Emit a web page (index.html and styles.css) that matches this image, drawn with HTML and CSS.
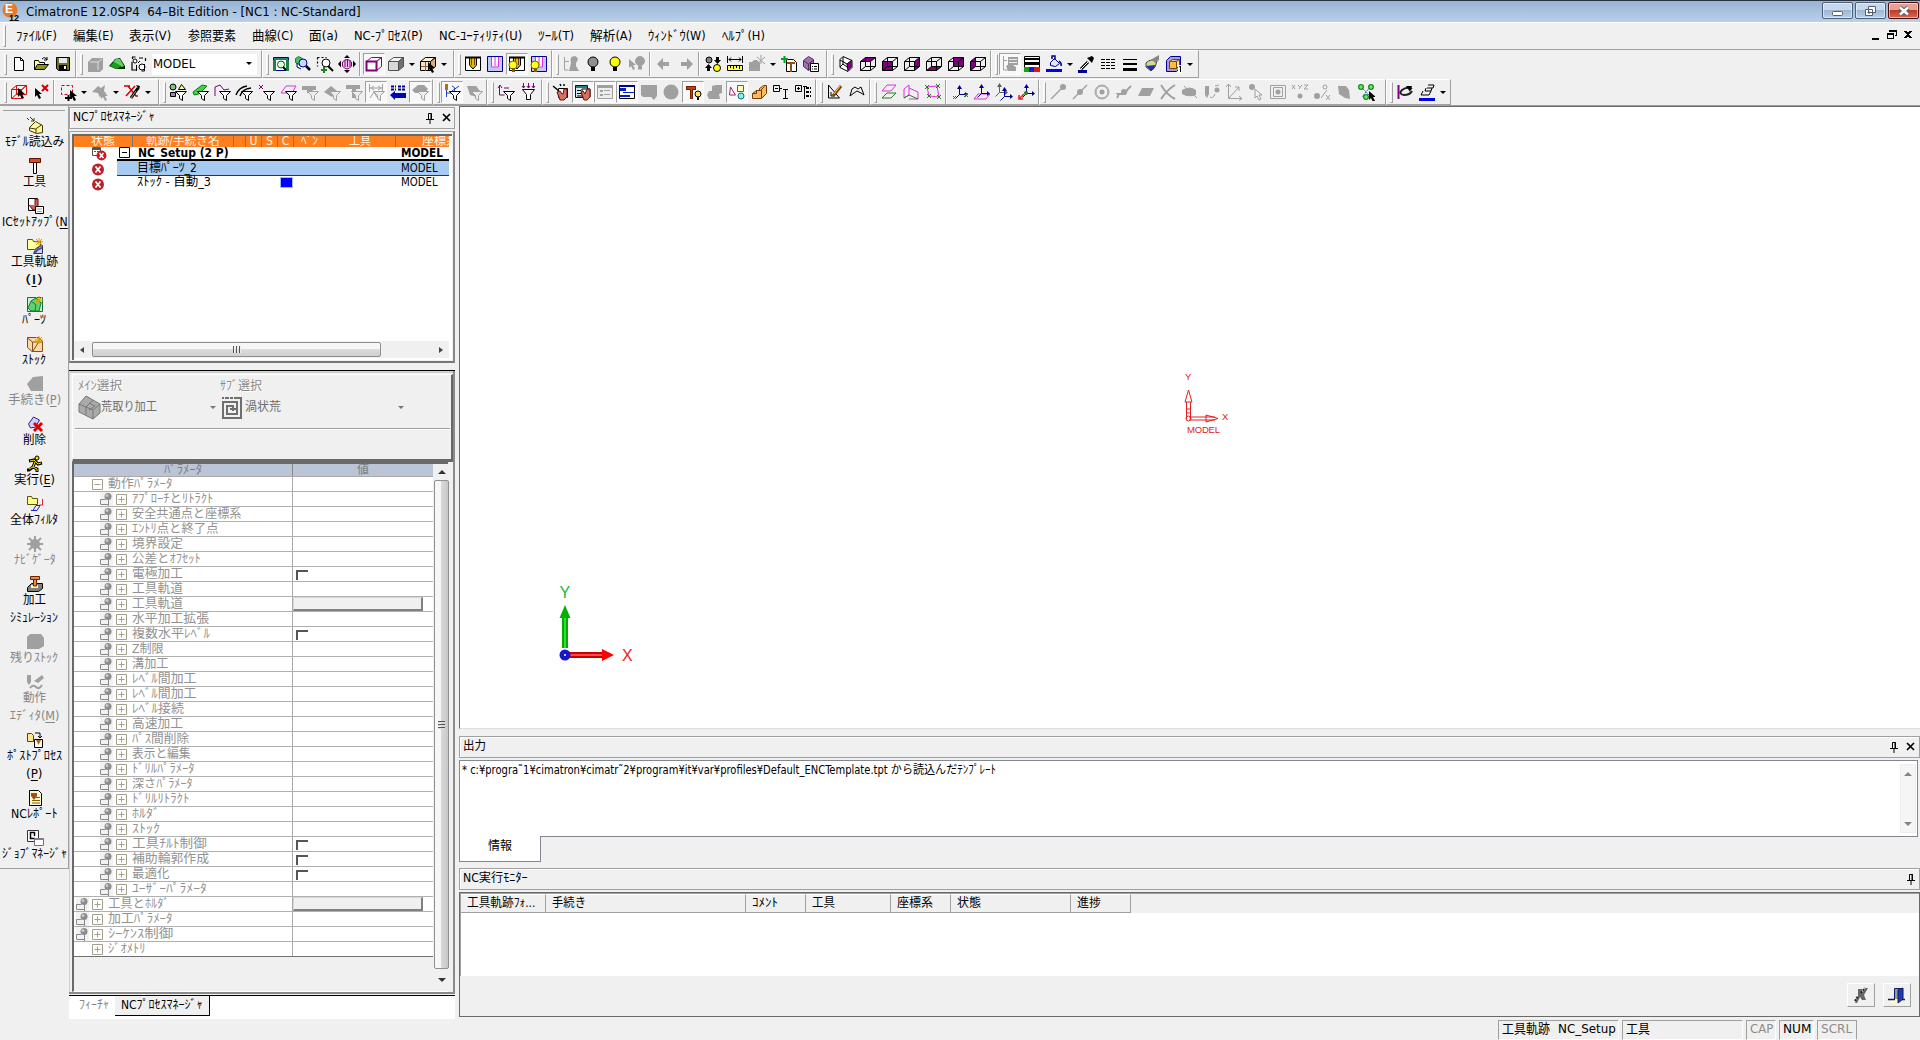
FILE: index.html
```
<!DOCTYPE html>
<html lang="ja">
<head>
<meta charset="utf-8">
<title>CimatronE 12.0SP4</title>
<link rel="stylesheet" href="styles.css">
</head>
<body>
<header class="titlebar">
  <svg class="app-icon" width="18" height="20" viewBox="0 0 18 20"><circle cx="8" cy="8" r="7.5" fill="#e8782a"/><text x="3" y="11" class="app-e">E</text><text x="7" y="19" class="app-n">12</text></svg>
  <span class="t" data-w="335">CimatronE 12.0SP4&nbsp; 64–Bit Edition - [NC1 : NC-Standard]</span>
  <div class="winbtns">
    <span class="winbtn"><svg width="30" height="16"><rect x="9.500" y="8.500" width="10" height="4" rx="1" fill="#fff" stroke="#555f70"/></svg></span>
    <span class="winbtn"><svg width="30" height="16"><path d="M12.500 3.500h7v6h-7zM9.500 6.500h7v6h-7z" fill="#fff" stroke="#555f70"/><path d="M12 9h2v1h-2z" fill="#555f70" stroke="#555f70"/></svg></span>
    <span class="winbtn close"><svg width="30" height="16"><path d="M11 4.500l8 7M19 4.500l-8 7" stroke="#555f70" stroke-width="4.500"/><path d="M11 4.500l8 7M19 4.500l-8 7" stroke="#fff" stroke-width="2.500"/></svg></span>
  </div>
</header>
<nav class="menubar">
  <i class="grip"></i>
  <span class="t" data-w="41">ﾌｧｲﾙ(F)</span><span class="t" data-w="41">編集(E)</span><span class="t" data-w="42">表示(V)</span><span class="t" data-w="48">参照要素</span><span class="t" data-w="41">曲線(C)</span><span class="t" data-w="29">面(a)</span><span class="t" data-w="69">NC-ﾌﾟﾛｾｽ(P)</span><span class="t" data-w="83">NC-ﾕｰﾃｨﾘﾃｨ(U)</span><span class="t" data-w="36">ﾂｰﾙ(T)</span><span class="t" data-w="42">解析(A)</span><span class="t" data-w="58">ｳｨﾝﾄﾞｳ(W)</span><span class="t" data-w="43">ﾍﾙﾌﾟ(H)</span>
  <svg class="mdi" width="44" height="12" shape-rendering="crispEdges"><path d="M3 8h7v2H3z"/><path d="M20.500 .5h7v5h-2M18.500 3.500h6v5h-6z" fill="none" stroke="#000"/><path d="M20 0h8v2h-8zM18 3h7v2h-7z"/><path d="M36 1l6 7M42 1l-6 7" stroke="#000" stroke-width="2.200"/></svg>
</nav>
<div class="toolbar row1" id="row1"></div>
<div class="toolbar row2" id="row2"></div>
<main class="work">
  <aside class="side" id="side"></aside>
  <section class="manager">
    <div class="cap"><span class="t" data-w="82">NCﾌﾟﾛｾｽﾏﾈｰｼﾞｬ</span><span class="cap-ico"><svg width="8" height="12" class="pin"><path d="M2.500 7V1.500h3V7M0 7.500h8M4 8v4M5 1v6" /></svg><svg width="9" height="9" class="x"><path d="M1 1l7 7M8 1l-7 7"/></svg></span></div>
    <div class="sunk tree">
      <div class="tree-in">
        <div class="thead"><b><span class="t" data-w="24">状態</span></b><b><span class="t" data-w="74">軌跡/手続き名</span></b><b></b><b>U</b><b>S</b><b>C</b><b><span class="t" data-w="17">ﾍﾟﾝ</span></b><b><span class="t" data-w="22">工具</span></b><b class="cut"><span class="t" data-w="36">座標系</span></b></div>
        <div class="prow first"><span class="st"><svg width="15" height="14"><path d="M.5 .5h8v8h-8z" fill="#fff" stroke="#555"/><path d="M1 1h7v2H1zM2 4h2v1H2zM5 4h2v1H5z" fill="#555"/><circle cx="9.500" cy="8.500" r="5" fill="#c41e2a"/><path d="M7.500 6l4 5M11.500 6l-4 5" stroke="#fff" stroke-width="1.500"/></svg></span><span class="nm"><svg width="11" height="11" class="box"><path d="M.5 .5h10v10H.5zM3 5.500h5"/></svg><span class="t" data-w="91">NC_Setup (2 P)</span></span><span class="md"><span class="t" data-w="42">MODEL</span></span></div>
        <div class="prow sel"><span class="st"><svg width="12" height="13"><circle cx="6" cy="6.500" r="6" fill="#b8232c"/><path d="M3.500 3.500l5 6M8.500 3.500l-5 6" stroke="#fff" stroke-width="1.800"/></svg></span><span class="nm leaf"><span class="t" data-w="60">目標ﾊﾟｰﾂ_2</span></span><span class="md"><span class="t" data-w="37">MODEL</span></span></div>
        <div class="prow last"><span class="st"><svg width="12" height="13"><circle cx="6" cy="6.500" r="6" fill="#b8232c"/><path d="M3.500 3.500l5 6M8.500 3.500l-5 6" stroke="#fff" stroke-width="1.800"/></svg></span><span class="nm leaf"><span class="t" data-w="74">ｽﾄｯｸ - 自動_3</span><i class="swatch"></i></span><span class="md"><span class="t" data-w="37">MODEL</span></span></div>
        <div class="hscroll"><i class="la"></i><div class="thumb"><i></i><i></i><i></i></div><i class="ra"></i></div>
      </div>
    </div>
    <div class="param-wrap">
      <div class="chooser">
        <div class="ch-labels"><span class="t" data-w="44">ﾒｲﾝ選択</span><span class="t second" data-w="42">ｻﾌﾞ選択</span></div>
        <div class="ch-vals">
          <svg width="23" height="25"><path d="M1 9L8 1l14 8v9l-7 6-14-7z" fill="#aaa" stroke="#777"/><path d="M1 9l14 6v9M15 15l7-6M8 12l7-7M8 12v8M11 8l6 3-6 4" fill="none" stroke="#777"/></svg><span class="t" data-w="56">荒取り加工</span><i class="dn a1"></i>
          <svg width="21" height="22" class="spiral" shape-rendering="crispEdges"><path d="M0 0h2v2H0zM3 0h4v2H3zM8 0h3v2H8zM12 0h8v2h-8z" fill="#6f6f6f"/><path d="M19 1v20H1V5h14v12H5V9h6v5M8 12h6" fill="none" stroke="#6f6f6f" stroke-width="2"/></svg><span class="t" data-w="36">渦状荒</span><i class="dn a2"></i>
        </div>
        <hr>
      </div>
      <div class="ptable">
        <div class="pt-main"><div class="pt-head"><span><span class="t" data-w="38">ﾊﾟﾗﾒｰﾀ</span></span><span><span class="t" data-w="12">値</span></span></div><div id="params"></div></div>
        <div class="vscroll"><i class="ua"></i><div class="vthumb"><i></i><i></i><i></i></div><i class="da"></i></div>
      </div>
    </div>
    <div class="tabs"><span class="tab off"><span class="t" data-w="30">ﾌｨｰﾁｬ</span></span><span class="tab on"><span class="t" data-w="82">NCﾌﾟﾛｾｽﾏﾈｰｼﾞｬ</span></span></div>
  </section>
  <section class="right">
    <div class="viewport">
      <svg width="1456" height="620" class="scene">
        <g stroke="#e02020" fill="none"><path d="M726.500 312V295M730.500 312V295M725 295h7l-3.500-12zM729 313h26M729 310h26M746 308v7l12-3.500zM726 306h5M726 302h5"/><circle cx="728.500" cy="311.500" r="2.500"/></g>
        <g class="model-t"><text x="725" y="273">Y</text><text x="762" y="313">X</text><text x="727" y="325.500" textLength="33">MODEL</text></g>
        <path d="M102 541V509h6v32z" fill="#05a805"/><path d="M104 541V509h2v32z" fill="#27e827"/><path d="M99.500 511h11l-5.500-13z" fill="#05b005"/>
        <path d="M109 545h34v6h-34z" fill="#c80000"/><path d="M109 547h34v2h-34z" fill="#ff4848"/><path d="M142 542v12l12-6z" fill="#f00"/>
        <circle cx="105" cy="548" r="5.500" fill="#1717c8"/><circle cx="105" cy="548" r="1" fill="#fff"/>
        <text class="ax gy" x="99.500" y="491">Y</text><text class="ax rx" x="162" y="553.500">X</text>
      </svg>
    </div>
    <div class="cap out-cap"><span class="t" data-w="23">出力</span><span class="cap-ico"><svg width="8" height="12" class="pin"><path d="M2.500 7V1.500h3V7M0 7.500h8M4 8v4M5 1v6" /></svg><svg width="9" height="9" class="x"><path d="M1 1l7 7M8 1l-7 7"/></svg></span></div>
    <div class="output"><p><span class="t" data-w="534">* c:¥progra˜1¥cimatron¥cimatr˜2¥program¥it¥var¥profiles¥Default_ENCTemplate.tpt から読込んだﾃﾝﾌﾟﾚｰﾄ</span></p><div class="oscroll"><i class="ua"></i><i class="da"></i></div></div>
    <div class="out-tabs"><span><span class="t" data-w="24">情報</span></span><i></i></div>
    <div class="cap nc-cap"><span class="t" data-w="65">NC実行ﾓﾆﾀｰ</span><span class="cap-ico"><svg width="8" height="12" class="pin"><path d="M2.500 7V1.500h3V7M0 7.500h8M4 8v4M5 1v6" /></svg></span></div>
    <div class="monitor">
      <div class="mhead"><span><span class="t" data-w="68">工具軌跡ﾌｫ...</span></span><span><span class="t" data-w="34">手続き</span></span><span><span class="t" data-w="26">ｺﾒﾝﾄ</span></span><span><span class="t" data-w="23">工具</span></span><span><span class="t" data-w="36">座標系</span></span><span><span class="t" data-w="24">状態</span></span><span><span class="t" data-w="24">進捗</span></span></div>
      <div class="mbody"></div>
      <div class="mfoot"><span class="btn"><svg width="16" height="18"><path d="M5 3h4v4l4-5h2l-4 7 2 5H9L7 11l-3 6H2l3-7z" fill="#666"/><path d="M2 15l3-5M8 7l4-5" stroke="#222" stroke-width="2" stroke-dasharray="2 1"/></svg></span><span class="btn"><svg width="18" height="18"><path d="M1 17l5-4h4v4z" fill="#ffffc0"/><path d="M6.500 13V2.500h8" fill="none" stroke="#111a70"/><path d="M7 3h4v10H7z" fill="#999"/><path d="M10 4l5-2v11l-5 4z" fill="#1c3cb0" stroke="#101a60"/><path d="M0 13.500h7M14 13.500h3" stroke="#101a60" stroke-width="1.500"/></svg></span></div>
    </div>
  </section>
</main>
<footer class="status"><span class="w1"><span class="t" data-w="48">工具軌跡</span><span class="t" data-w="58">NC_Setup</span></span><span class="w2"><span class="t" data-w="24">工具</span></span><span class="w3 dim"><span class="t" data-w="23">CAP</span></span><span class="w4"><span class="t" data-w="28">NUM</span></span><span class="w5 dim"><span class="t" data-w="31">SCRL</span></span></footer>
<script src="app.js"></script>
</body>
</html>
```
FILE: styles.css
```
* { box-sizing: border-box; }
body { margin: 0; width: 1920px; height: 1040px; overflow: hidden; display: flex; flex-direction: column; background: #f0f0f0; color: #000; font: 12px/15px "DejaVu Sans Condensed", "Noto Sans", "Noto Sans CJK JP", sans-serif; }
svg { display: block; flex: none; }
.t { display: inline-block; white-space: pre; transform-origin: 0 50%; flex: none; }
i { flex: none; }

.titlebar { height: 22px; flex: none; display: flex; align-items: center; border-top: 1px solid #26323f; background: linear-gradient(#98b4d3, #b9d0ea); padding: 0 1px 0 2px; font-size: 13px; }
.app-icon { margin-right: 6px; }
.app-e { font: bold 12px "Liberation Sans", sans-serif; fill: #fff; }
.app-n { font: bold 9px "Liberation Sans", sans-serif; }
.winbtns { margin: -2px 0 0 auto; display: flex; gap: 2px; }
.winbtn { width: 31px; height: 17px; border: 1px solid #4d6078; border-radius: 2px; background: linear-gradient(#c5d8ed 45%, #9db7d3 50%, #b9d0e8); box-shadow: inset 0 0 0 1px #ffffff80; }
.winbtn.close { border-color: #4a1018; background: linear-gradient(#e4a294 45%, #c13a2a 50%, #d46a50); }

.menubar { height: 27px; flex: none; display: flex; align-items: center; gap: 16px; padding: 0 7px 0 3px; border-top: 1px solid #fff; font-size: 13px; }
.menubar .t { margin-top: -1px; }
.menubar .grip { margin-right: -6px; height: 22px; }
.mdi { margin-left: auto; }
.grip { width: 3px; height: 21px; border: 1px solid; border-color: #fff #a0a0a0 #a0a0a0 #fff; }

.toolbar { display: flex; flex: none; border-top: 1px solid #a0a0a0; }
.row1 { height: 29px; }
.row2 { height: 28px; border-top-color: #f0f0f0; border-bottom: 1px solid #a0a0a0; }
.group { display: flex; align-items: center; border-top: 1px solid #fff; border-right: 1px solid #a0a0a0; border-left: 1px solid #fff; border-bottom: 1px solid #a0a0a0; padding-left: 3px; }
.group.start { border-left: 0; padding-left: 4px; }
.group .grip { margin-right: 1px; }
.ic { width: 22px; height: 22px; flex: none; display: flex; align-items: center; justify-content: center; }
.ic.on { border: 1px solid; border-color: #a0a0a0 #fff #fff #a0a0a0; background: #f8f8f8; }
.sep { width: 5px; height: 24px; border-left: 1px solid #a0a0a0; box-shadow: inset 1px 0 #fff; margin-left: 1px; margin-right: -1px; }
.dd { width: 10px; display: flex; justify-content: center; }
.dd::after, .dn { content: ""; border: solid transparent; border-width: 3px 3px 0; border-top-color: #000; width: 0; height: 0; }
.combo { width: 105px; height: 21px; background: #fff; display: flex; align-items: center; padding: 0 3px 2px 1px; justify-content: space-between; margin-left: 2px; font-size: 13px; }

.work { flex: none; height: 914px; display: grid; grid-template-columns: 69px 387px 1464px; }
.side { height: 763px; border-right: 1px solid #a0a0a0; border-bottom: 1px solid #a0a0a0; padding: 11px 0 0 1px; overflow: hidden; background: linear-gradient(#a0a0a0, #a0a0a0) 3px 4px / 62px 1px no-repeat, #f0f0f0; }
.tool { height: 40px; display: flex; flex-direction: column; align-items: center; line-height: 18px; font-size: 12.500px; }
.tool.two { height: 58px; }
.tool svg { margin-bottom: -2px; }
.tool.off { color: #868686; }
.tool u { text-underline-offset: 2px; }

.cap { border: 1px solid #a0a0a0; height: 22px; display: flex; align-items: center; padding: 0 4px 1px 3px; flex: none; box-shadow: inset 1px 1px #fff; }
.cap-ico { margin-left: auto; display: flex; gap: 8px; align-items: center; }
.pin path { stroke: #000; fill: none; }
.x path { stroke: #000; stroke-width: 1.700; }
.manager { display: flex; flex-direction: column; padding-top: 1px; width: 386px; }
.manager .cap { padding-right: 3px; }
.tree { margin-top: 2px; height: 232px; border: 1px solid #a0a0a0; border-bottom: 2px solid #777; border-right: 2px solid #888; padding: 2px 1px 1px 2px; }
.tree-in { height: 100%; background: #fff; border: solid #696969; border-width: 2px 0 0 2px; display: flex; flex-direction: column; padding-right: 3px; overflow: hidden; }
.thead { display: grid; grid-template-columns: 59px 101px 12px 16px 16px 16px 32px 70px 54px; height: 11px; flex: none; background: #ff7f1e; color: #fff3e0; }
.thead b { font-weight: 400; font-size: 12px; line-height: 11px; border-right: 1px solid #777; text-align: center; overflow: hidden; height: 11px; }
.thead .cut { border: 0; text-align: right; margin-right: -8px; }
.prow { height: 14px; flex: none; display: flex; line-height: 14px; font-size: 12.500px; }
.st { width: 43px; padding-left: 18px; flex: none; }
.nm { width: 284px; display: flex; padding-left: 20px; flex: none; }
.first .nm { padding-left: 2px; gap: 8px; }
.md { flex: 1; }
.first { font-weight: bold; line-height: 12px; height: 14px; }
.first .nm, .first .md { border-bottom: 2px solid #000; }
.sel .nm, .sel .md { background: #a6caf0; border-bottom: 1px solid #243a52; line-height: 13px; }
.prow.sel { height: 15px; }
.prow.last { line-height: 12px; }
.prow .st svg { margin-top: 2px; }
.first .st svg, .first .box { margin-top: 0; }
.box path { fill: #fff; stroke: #000; }
.swatch { width: 13px; height: 11px; background: #00f; border: 1px solid #a6b8f0; margin: 1px 0 0 69px; }
.hscroll { height: 17px; margin: auto 0 2px; display: flex; align-items: center; background: #f0f0f0; padding: 0 6px; }
.la, .ra { border: solid transparent; border-width: 3px 4px 3px 0; border-right-color: #444; }
.ra { border-width: 3px 0 3px 4px; border-left-color: #444; margin-left: auto; }
.thumb { width: 289px; height: 15px; margin-left: 8px; border: 1px solid #8f8f8f; border-radius: 2px; background: linear-gradient(#f6f6f6 45%, #dcdcdc 50%, #cfcfcf); display: flex; gap: 1px; align-items: center; justify-content: center; }
.thumb i { width: 2px; height: 7px; background: #555; border-right: 1px solid #eee; }

.param-wrap { margin-top: 7px; border-top: 1px solid #000; padding: 3px 2px 2px 3px; height: 624px; display: flex; flex-direction: column; box-shadow: inset -2px -2px #8a8a8a, inset 1px 2px #d0d0d0; }
.chooser { height: 88px; flex: none; border: 1px solid #fff; border-right: 2px solid #696969; border-bottom: 3px solid #696969; padding: 4px 1px 0 5px; color: #8a8a8a; }
.ch-labels { display: flex; text-shadow: 1px 1px #fff; }
.ch-labels .second { margin-left: 98px; }
.ch-vals { display: flex; align-items: center; height: 27px; color: #6c6c6c; }
.dn { border-width: 3px 3px 0; border-top-color: #777; }
.a1 { margin-left: 53px; }
.spiral { margin: 0 2px 0 6px; }
.a2 { margin-left: 117px; }
.chooser hr { margin: 7px 0 0 -3px; border: 0; border-top: 1px solid #a0a0a0; border-bottom: 1px solid #fff; }
.ptable { flex: 1; border-left: 2px solid #696969; border-top: 2px solid #696969; display: flex; border-bottom: 1px solid #fff; margin-right: 5px; }
.pt-main { width: 359px; }
.pt-head, .param { display: grid; grid-template-columns: 219px 140px; }
.pt-head { height: 13px; line-height: 12px; background: #bcc5d5; color: #7a7f88; text-align: center; border-bottom: 1px solid #a9a9a9; }
.pt-head > span:first-child { border-right: 1px solid #888; }
.param { height: 15px; background: #fff; border-bottom: 1px solid #b0b0b0; color: #929292; font-size: 12.500px; line-height: 14px; }
.param:last-child { border-bottom-color: #707070; }
.pn { border-right: 1px solid #a9a9a9; display: flex; padding-left: 18px; height: 14px; }
.pn.child { padding-left: 26px; }
.pn.pinned { padding-left: 2px; }
.pn .lock { width: 13px; height: 14px; margin-right: 3px; background: #f2f2f2; }
.pn .box { margin: 2px 5px 0 0; }
.pn .box path { stroke: #a3a08c; }
.chk { width: 12px; height: 10px; margin: 3px 0 0 3px; border: solid #555; border-width: 2px 0 0 2px; display: block; }
.bar { display: block; width: 130px; height: 14px; background: #f0f0f0; border: 1px solid #d8d8d8; border-right: 2px solid #808080; border-bottom: 2px solid #808080; }
.vscroll { width: 15px; background: #f0f0f0; margin-left: 1px; display: flex; flex-direction: column; align-items: center; padding: 6px 0 9px; }
.ua, .da { border: solid transparent; border-width: 0 4px 4px; border-bottom-color: #333; }
.da { border-width: 4px 4px 0; border-top-color: #333; margin-top: auto; }
.vthumb { margin-top: 6px; height: 489px; width: 15px; border: 1px solid #909090; border-radius: 2px; background: linear-gradient(90deg, #f7f7f7 45%, #d8d8d8 50%, #c8c8c8); display: flex; flex-direction: column; gap: 1px; align-items: center; justify-content: center; flex: none; }
.vthumb i { height: 2px; width: 7px; background: #555; border-bottom: 1px solid #ddd; }
.tabs { height: 24px; border-top: 1px solid #000; background: #fff; margin-top: 1px; display: flex; }
.tab { display: flex; line-height: 18px; }
.tab.off { width: 46px; padding-left: 10px; color: #858585; }
.tab.on { width: 95px; height: 20px; padding-left: 6px; background: #f0f0f0; border: solid #000; border-width: 0 1px 1px 0; }

.right { display: flex; flex-direction: column; padding-left: 3px; }
.viewport { height: 623px; flex: none; background: #fff; border: solid #696969; border-width: 1px 0 0 1px; border-bottom: 1px solid #dcdcdc; }
.model-t { font: 9.500px "Liberation Sans", sans-serif; fill: #e02020; }
.ax { font: 16px "Liberation Sans", sans-serif; }
.gy { fill: #20b830; }
.rx { fill: #f02020; }
.out-cap { margin-top: 7px; }
.output { margin: 2px 2px 0 0; height: 77px; flex: none; background: #fff; border: 1px solid #828790; display: flex; padding: 3px 1px 3px 2px; justify-content: space-between; }
.output p { margin: 0; line-height: 13px; }
.oscroll { width: 16px; background: #f0f0f0; border: 1px solid #e4e4e4; padding: 7px 0 6px; display: flex; flex-direction: column; align-items: center; opacity: .6; }
.out-tabs { display: flex; height: 26px; flex: none; margin-top: -1px; }
.out-tabs > span { width: 82px; background: #fff; border: solid #828790; border-width: 0 1px 1px; display: flex; padding: 3px 0 0 28px; }
.nc-cap { margin-top: 6px; }
.monitor { margin-top: 2px; height: 125px; border: 1px solid #696969; display: flex; flex-direction: column; }
.mhead { display: grid; grid-template-columns: 85px 200px 60px 85px 60px 120px 60px; height: 20px; border-top: 1px solid #a0a0a0; border-left: 1px solid #a0a0a0; }
.mhead > span { border: solid; border-width: 1px 1px 1px 0; border-color: #fff #a0a0a0 #a0a0a0; padding-left: 6px; line-height: 16px; display: flex; }
.mbody { height: 63px; background: #fff; border-left: 1px solid #a0a0a0; }
.mfoot { flex: 1; display: flex; justify-content: flex-end; gap: 8px; padding: 7px 8px 0; }
.btn { width: 28px; height: 24px; border: solid; border-width: 1px; border-color: #fff #a0a0a0 #a0a0a0 #fff; display: flex; align-items: center; justify-content: center; }

.status { flex: 1; display: flex; justify-content: flex-end; gap: 3px; padding: 0 63px 0 0; font-size: 13px; }
.status > span { height: 20px; border: solid; border-width: 1px; border-color: #a0a0a0 #fff #fff #a0a0a0; padding: 1px 0 0 3px; display: flex; gap: 8px; line-height: 14px; }
.w1, .w2 { width: 121px; }
.w3 { width: 30px; }
.w4 { width: 35px; }
.status > .w5 { width: 40px; border-right-color: #a0a0a0; }
.dim { color: #8c8c8c; }
```
FILE: app.js
```
const G = '#a0a0a0', P = '#800080', K = '#000', N = '#000090', M = '#e030e0', D = '#208020';
const s = (d, c = K, f = 'none', w = 1) => `<path d="${d}" stroke="${c}" fill="${f}" stroke-width="${w}"/>`;
const f = (d, c = K) => `<path d="${d}" fill="${c}"/>`;
const c = (x, y, r, fill, st = 'none') => `<circle cx="${x}" cy="${y}" r="${r}" fill="${fill}" stroke="${st}"/>`;
const fun = (k = K, w = '#fff') => s('M6.500 8.500H17.500L13.500 12.500V17.500L10.500 15.500V12.500Z', k, w);
const cursor = (k = K, x = 9, y = 7) => f(`M${x} ${y}v9l2-2 2 4 2-1-2-4h3z`, k);
const faces = {
  top: 'M1.500 6.500L6.500 2.500H16.500L11.500 6.500Z', front: 'M1.500 6.500h10v9h-10z', right: 'M11.500 6.500l5-4v9l-5 4z',
  bottom: 'M1.500 15.500L6.500 11.500H16.500L11.500 15.500Z', back: 'M6.500 2.500h10v9h-10z', left: 'M1.500 6.500l5-4v9l-5 4z'
};
const wire = face => (face ? f(faces[face], P) : '') + s(faces.front) + s(faces.back) + s('M1.500 6.500l5-4M11.500 6.500l5-4M1.500 15.500l5-4M11.500 15.500l5-4');
const solid = (a, b, d, k = K) => s(faces.front, k, a) + s(faces.top, k, b) + s(faces.right, k, d);
const bulb = (x, y, r, col, k = K) => c(x, y, r, col, k) + f(`M${x - 2} ${y + r}h4v4h-4z`, k);
const cutter = s('M1.500 2.500h15v13h-15z', K, '#fff') + s('M5.500 3v7l3.500 4 3.500-4V3', K, '#d8c000') + s('M7.500 3v7M10.500 3v7', '#804000') + s('M1 2.500h16', K, 'none', 2);
const pocket = s('M1.500 1.500h15v15h-15z', N, '#c0c8f8') + f('M5 2h8v10H5z', '#fff') + s('M5.500 2v10h7V2M9 2v9', M);
const dots = (k, pts) => pts.map(p => c(p[0], p[1], 2, k)).join('');
const triad = (k, x = 0, y = 0) => s(`M${7.5 + x} ${3 + y}v7.500h7M${7.5 + x} ${10.5 + y}l-4 4`, k) + f(`M${5 + x} ${5 + y}h5l-2.500-4zM${13 + x} ${8 + y}v5l3-2.500z`, k);

const I = {
  new: s('M4.500 2.500h6l3 3v10h-9z', K, '#fff') + s('M10.500 2.500v3h3'),
  open: s('M2.500 14.500v-9h4l1 2h5v2', K, '#ffff90') + s('M2.500 14.500l3-5h11l-4 5z', K, '#909020') + s('M10 4q3-3 5 1M15 2v3h-3'),
  save: s('M2.500 2.500h13v13h-11l-2-2z', K, '#707020') + f('M5 3h8v5H5z', '#e8e8e8') + f('M5 10h8v5H5z') + f('M10 11h2v3h-2z', '#fff'),
  gcubes: f('M2 7l4-4h11v11l-3 3H2z', G) + s('M4 7h8v8M12 7l4-3', '#ddd'),
  green: f('M1 11l6-7 5-1 5 8v3h-9z', '#003000') + f('M5 7l3-3 4 0 4 7-2 1z', '#60d060') + f('M2 11l4-4 7 4-4 3z', '#18a018'),
  swap: s('M2.500 4v-2h3M2 7v8h4M9 3h4M15.500 3v3', K, 'none', 1.2) + c(5, 6, 2, '#fff', K) + c(12, 12, 3, '#fff', K) + s('M6.500 10v6M14.500 9v7h-3M8 8l2-2'),
  fit: s('M1.500 2.500h15v13h-15z', N, '#fff') + f('M2 3h14v2H2z', '#208080') + f('M1 5h3v11H1zM14 5h3v11h-3z', '#208040') + c(9, 9.5, 3.500, '#e0ffe0', '#006000') + s('M11 12l3 3', K, 'none', 2),
  zoomw: s('M1.500 3.500l3-2 4 2v5l-4 1-3-2z', D, '#40c060') + c(9, 8, 4, '#c8d8ff', N) + s('M12 11l4 4', K, 'none', 2.500) + s('M3 8v4l4 2', N),
  zoomb: s('M1.500 2.500h9M1.500 2.500v9', K, 'none', 1.2).replace('/>', ' stroke-dasharray="2 2"/>') + c(10, 8, 4, '#fff', K) + s('M12 11l5 5', K, 'none', 2) + s('M8 12v6M5 15h6', D, 'none', 2),
  pan: f('M6 3l3-3 3 3zM6 15l3 3 3-3zM3 5.500L0 9l3 3.500zM15 5.500l3 3.500-3 3.500z') + s('M4.500 7q4.500-5 9 0v4q-4.500 6-9 0z', P, '#f0c0f0') + s('M7 5v7M9.500 4v8M12 5v7', P),
  pcube: solid('#fff', '#fff', '#fff', P) + s(faces.front, P, 'none', 2),
  gcube: solid('#d8d8d8', '#f4f4f4', '#707070', '#505050'),
  bcube: solid('#f8e0c0', '#fff0d8', '#d8b080') + s('M6.500 7v9M2 11.500h9', '#806040') + cursor(),
  cutter, pocket,
  cutterb: cutter + c(5, 10, 4, '#ffff20', '#806000') + f('M4 13h3v4H4z', '#806000'), pocketb: pocket + c(5, 10, 4, '#ffff20', '#806000') + f('M4 13h3v4H4z', '#806000'),
  gtree: s('M2.500 2v13h4M2 6.500h5', G) + f('M9 8q-2-7 4-7 5 2 1 7v3l3 5H7z', G),
  bulbg: bulb(9, 7, 5, '#909090'), bulby: bulb(9, 7, 5, '#ff0'),
  gbulb: cursor(G, 1, 4) + bulb(12, 6, 4.500, G, G),
  back: f('M2 9l6-6v4h6v4H8v4z', G), fwd: f('M16 9l-6-6v4H4v4h6v4z', G),
  shapes: c(5, 5, 3, '#808080', K) + f('M12 2h3v3h2l-3.500 4L10 5h2zM3 16v-3H1l3.500-4L8 13H6v3z') + c(13, 13, 3.500, '#ff0', K),
  ruler: s('M1.500 1v7M16.500 1v7M3 4.500h12M5 2.500L3 4.500l2 2M13 2.500l2 2-2 2') + s('M1.500 10.500h15v5h-15z', K, '#ffff40') + s('M4.500 11v2M7.500 11v3M10.500 11v2M13.500 11v3'),
  gsun: f('M1 7h3l2-2h3l3 3v8H1z', G) + s('M9 2l8 7M17 2L9 9M13 0v9', G),
  doc: s('M6.500 4.500h7l3 3v9h-10z', K, '#fff') + s('M1 4h7M4.500 1v7', '#00a020', 'none', 2) + f('M7 7h8v2H7zM10 8h2v9h-2z', '#905010'),
  cubel: s('M1.500 5.500l5-4 5 3v7l-5 4-5-4z', '#503058', '#a070b0') + s('M2 6l4.500 3 5-4M6.500 9v6', '#503058') + s('M8.500 8.500h8v8h-8z', K, '#fff') + s('M10 11.500h1M12 11.500h3M10 14h1M12 14h3'),
  iso: s('M6 1.500l9 4v7L11 16.500l-8-4v-8z', K, '#fff') + f('M10 9l5-4v7l-4 4z', P) + s('M3 5l7 4 5-4M10 9l1 7M6 2v7l4 3M3 12l3-3'),
  top: wire('top'), front: wire('front'), right: wire('right'), bottom: wire('bottom'), vback: wire('back'), left: wire('left'),
  glist: s('M2.500 1v14h5M2 5.500h4', G) + f('M7 2h10v8H7zM5 11q4-4 10 1v4H7z', G) + s('M8 4.500h8M8 7.500h8', '#eee'),
  lines: s('M1.500 1.500h15v15h-15z', K, '#fff') + f('M2 3h14v2H2zM2 7h14v3H2z') + f('M1 12h5v5H1z', '#18a018') + f('M6 12h5v5H6z', '#1818e0') + f('M11 12h6v5h-6z', '#e01818'),
  paint: s('M5.500 7.500l4-4 5 5-4 3-5-1z', N, '#e0e8ff') + s('M7 4V1h3v4M14 6q3 2 2 5', N, 'none', 1.5) + f('M1 14h16v3H1z', '#00e'),
  dropper: s('M4 14l7-7', K, 'none', 3) + s('M4 14l7-7', '#fff', 'none', 1) + f('M10 3l5 5 2-5-2-2z') + f('M1 15h9v3H1z', N),
  dash: s('M2 4.500h14M2 7.500h14M2 10.500h14M2 13.500h14').replace('/>', ' stroke-dasharray="4 1"/>'),
  thick: f('M2 4h14v1H2zM2 8h14v2H2zM2 13h14v3H2z'),
  spray: s('M3 8q5-5 11-2l-2 6-4 4-5-4z', '#404040', '#d8d890') + f('M3 11l9-1-1 4-3 2z', '#2030a0') + f('M9 4l7-4v5l-4 3z', '#888'),
  boxone: s('M1.500 5.500l4-4h10v11l-4 4h-10z', N, '#a0a0d8') + s('M4.500 6.500h7v7h-7z', '#804000', '#ffc040') + s('M4.500 6.500l3-2h7v6l-3 3v-7l3-2', '#804000', '#ffe090') + f('M13 10h4v8h-4z', '#fff') + s('M14 12l1.500-1v6'),
  rcube: s(faces.front + faces.back, '#d01010') + s('M1.500 6.500l5-4M11.500 6.500l5-4M1.500 15.500l15-13', '#d01010') + cursor(K, 8, 5),
  curx: cursor(K, 3, 5) + s('M10 2l6 6M16 2l-6 6', '#d00000', 'none', 2),
  selbox: s('M2.500 2.500h11v9h-11z', '#c00020').replace('/>', ' stroke-dasharray="3 2"/>') + cursor(K, 11, 7) + s('M6 15h7M9.500 12v6', K, 'none', 2),
  gpick: f('M1 9l6-6 3 2 4-3-1 6 3 3-5-1-2 5-2-5z', G) + cursor(G, 10, 7),
  xpick: s('M2 3h3l8 10h2M12 3L3 13M1 3h6', '#d00000', 'none', 1.5) + s('M8 15l7-10', K, 'none', 3) + s('M8 15l5-7', '#80c080') + f('M13 2l4 1-1 4z'),
  f1: c(4, 4, 3, '#80c080', K) + s('M9.500 6.500l3-5 4 5z', K, '#ff8') + s('M1.500 9.500h5v4h-5z', K, '#a080c0') + fun(),
  f2: s('M2 9l9-7 5 1-8 8-5 1z', '#108010', '#40d040') + fun(), f3: s('M2 13V4l5-2 4 5 5-1', P) + fun(), f4: s('M1 12q3-8 11-9M5 13q2-7 11-8', K, 'none', 1.500) + fun(),
  f5: s('M2 2l4 4M6 2L2 6', P) + fun(), f6: s('M2 10l5-7h10l-4 7z', M) + fun(), f7: f('M1 3h14v4h-3l-2 3H6V7H1z', G) + fun(G, '#eee'), f8: f('M1 9l7-6 6 5-5 6z', G) + fun(G, '#eee'), f9: f('M1 2h14v4h-4v9H7V6H1z', G) + fun(G, '#eee'),
  f10: s('M2.500 1v8M15.500 1v8M3 5h12M7 3L4 5l3 2M11 3l3 2-3 2M3 15l4-6 3 5', G) + fun(G, '#eee'),
  filt: s('M2 3.500h5M2 6.500h5M9 3.500h7M9 6.500h7', N, 'none', 2).replace('/>', ' stroke-dasharray="3 1"/>') + f('M1 12l5-4v2h11v5H6v2z', '#0000c0'),
  f12: f('M1 7l6-5h6l4 4-3 4H4z', G) + fun(G, '#eee'),
  f13: s('M3.500 5v9M3.500 10h5M9 8l7-5M9 3q4 1 2 6', '#2040c0') + f('M2 1h3v6H2z', '#b07020') + fun(), f14: f('M2 3h9l4 5-3 6-7-2z', G) + fun(G, '#eee'),
  f15: s('M2.500 3v9h5M1 5l2-3 2 3M7 5h5', P) + fun(), f16: s('M4.500 0v5M9.500 0v5M14.500 0v5M3 3l1.500 2L6 3M8 3l1.500 2L11 3M13 3l1.500 2L16 3', P) + s('M3.500 6.500h12l-4 5v5h-4v-5z', K, '#fff'),
  hand: s('M1 3l6 5M8 1l1 2M12 1v2', K, 'none', 1.5) + s('M6.500 5.500h9v9h-9z', K, '#fff') + s('M5 9l3-1 2 3h1l1-5 3 0v8l-3 3H8z', '#601010', '#d87060'),
  calc: s('M1.500 2.500h12v12h-12z', N, '#d8e8f0') + f('M2 3h11v2H2z', '#208080') + s('M3 7.500h4M3 10.500h4M3 13h4') + s('M8 6h8v8H8z', K, '#fff') + s('M7 9l2-1 2 3 2-5h3v8l-3 3h-3z', '#601010', '#d87060'),
  gform: s('M1.500 2.500h15v13h-15z', G, '#eee') + f('M1 2h16v3H1zM4 7h3v2H4zM4 11h3v2H4zM8 7h6v1H8zM8 11h6v1H8z', G),
  form: s('M1.500 2.500h15v13h-15z', K, '#fff') + f('M2 5h6v3H2zM5 9h11v1H5zM2 12h10v2H2z', '#0020d0') + f('M1 2h16v2H1z', N),
  gb1: f('M1 2h16v11l-3 4-3-3H3l-2-2z', G), gb2: c(9, 9, 7.500, G), gb3: f('M6 3l4-1h6v8l-3 1 1 5H3l-2-4 2-4h3z', G),
  ham: f('M2 3h10v4H9v9H6V7H2z', '#c04010') + s('M2.500 3.500h9v3h-3v9h-2v-9h-4z', '#702000') + c(14, 11, 3, '#ffe060', K) + f('M13 14h2v3h-2z'),
  geo: s('M2.500 4l5 8h-6z', '#a02060', '#fff') + s('M9.500 2.500h6v6h-6z', '#806000', '#ffffc0') + c(13, 13, 3, '#80f0f0', '#107070'),
  step: s('M2.500 15.500v-5l4-3h3v-2l4-3h3v8l-5 5z', '#704000', '#ffb860') + s('M2.500 10.500h4l0-3h4l4-4M11.500 7v8', '#704000'),
  tr1: s('M1.500 2.500h6v6h-6zM3 5.500h3M8 5.500h2M11 6.500h5M13.500 6v9M11 15.500h5'),
  tr2: s('M1.500 2.500h6v6h-6zM3 5.500h3M4.500 4v3M9 3.500h4M10.500 3v13') + s('M12 5h5M12 9h5M12 13h5', K, 'none', 2).replace('/>', ' stroke-dasharray="3 1"/>'),
  sketch: s('M2.500 2v13h11z M5 9v4h3') + s('M7 13l8-10', '#804000', 'none', 3) + s('M8 11l6-8', '#ffd080', 'none', 1), curve: s('M2 13l2-7 3-2 3 2 3-2 3 8-3-2-4-2-3 2z', K),
  pl1: s('M2 8l5-6h9l-5 6z', M) + s('M2 15l5-5h9l-5 5z', D), pl2: s('M2 15V6l5-4v10z M7 5l9 4v7H7', M) + s('M2 15l5-3 9 4', D), pl3: s('M3 4l10-1 2 11-10-1z', M) + s('M1 2l4 4M5 2L1 6M12 1l4 4M16 1l-4 4M3 11l4 4M7 11l-4 4M13 12l4 4M17 12l-4 4', D),
  ax1: triad(N, 1, 1) + s('M2 13l3 3M5 13l-3 3M13 10l4 4M17 10l-4 4', D), ax3: s('M1 16l4-5h12l-4 5z', M) + triad(N, 1), ax4: triad('#606060', -3, -1) + triad(N, 2, 3), ax5: triad(N, 2) + s('M2 16l5-5M2 12v4h4', '#e02020', 'none', 1.5) + dots(D, [[9, 10]]),
  h1: s('M2 16L14 4', G, 'none', 1.5) + c(14, 4, 3, G), h2: s('M2 16L16 2', G, 'none', 1.5) + c(9, 9, 3, G), h3: c(9, 9, 7, 'none', G) + c(9, 9, 6, 'none', G) + c(9, 9, 2.500, G),
  h4: s('M2 15q2-3 1-4h7q2-5 6-8', G, 'none', 2) + c(9, 9, 3, G), h5: f('M1 13l4-8h12l-4 8z', G), h6: s('M2 2q6 10 14 14M16 2Q9 6 2 16', G, 'none', 2), h7: f('M1 7q8-5 14 0v5q-8 3-14-1z', G) + s('M3 3l13 12', G),
  h8: f('M2 3h4v8l-2 4-2-3z', G) + s('M7 14q3 2 5-3M12 3l4-1', G) + c(14, 7, 2.500, G), h9: s('M3.500 1v14.500h13M4 15L14 4M1 4l2.500-3L6 4M14 13l3 2.500-3 2M10 4h4v4', G), h10: c(5, 4, 3, G) + s('M8 6v9l2-2 2 4 2-1-2-4h3z', G), h11: s('M1.500 2.500h15v13h-15zM4.500 4.500h9v9h-9z', G) + c(9, 9, 2.500, G),
  h12: s('M1 2l3 4M4 2L1 6M7 2l2 2M11 2L8 6M13 2h4l-4 4h4', G) + c(9, 13, 2.500, G), h13: c(4, 13, 3, G) + c(12, 4, 2, 'none', G) + s('M8 15L14 7M13 12l4 5M17 12l-4 5', G), h14: f('M3 3h8l3 4 1 9-5-1-6-4z', G),
  h15: s('M4 4l10 10M13 4L5 14', '#4060d0').replace('/>', ' stroke-dasharray="2 1"/>') + [[4, 4], [14, 4], [9, 14]].map(p => c(p[0], p[1], 3, '#109010')).join('') + s('M2 4h4M4 2v4M12 4h4M14 2v4M7 14h4M9 12v4', '#90ff90') + cursor(K, 12, 8),
  rot: s('M2.500 2v14', P, 'none', 2) + s('M16 6q-5-3-10 1-4 4 2 5 6 0 8-4', '#222', 'none', 2) + f('M10 3h6l-2 6z'), layer: s('M10 2h6l-1 3h-6M8 5l-1 3h6l1-3M5 8l-2 4h8l2-4', K) + f('M1 15h16v3H1z', '#00e')
};

// Each entry: [width, items]; "|" separator, "v" drop-down arrow, "*" prefix a pressed button.
const row1 = [[76, 'new open save'], [186, 'gcubes green swap combo'], [192, 'fit zoomw zoomb pan | *pcube gcube v bcube v'], [98, 'cutter pocket *cutterb pocketb'],
  [275, 'gtree bulbg bulby gbulb | back fwd | shapes ruler gsun v doc cubel'], [164, 'iso top front right bottom vback left'], [208, '*glist lines paint v dropper dash thick spray boxone v']];
const row2 = [[159, 'rcube curx | selbox v gpick v xpick v'], [274, 'f1 f2 f3 f4 f5 f6 f7 f8 f9 *f10 filt *f12'], [54, '*f13 f14'], [55, 'f15 f16'],
  [274, 'hand *calc *gform *form gb1 gb2 *ham gb3 *geo step tr1 tr2'], [54, 'sketch curve'], [169, 'pl1 pl2 pl3 | ax1 ax3 ax4 ax5'], [347, 'h1 h2 h3 h4 h5 h6 h7 h8 h9 h10 h11 h12 h13 h14 h15'], [65, 'rot layer v']];
const svg = inner => `<svg width="18" height="18" viewBox="0 0 18 18">${inner}</svg>`;
const item = k => k === '|' ? '<i class="sep"></i>' : k === 'v' ? '<i class="dd"></i>'
  : k === 'combo' ? '<div class="combo"><span class="t" data-w="42">MODEL</span><i class="dd"></i></div>'
  : `<span class="ic${k[0] === '*' ? ' on' : ''}">${svg(I[k.replace('*', '')])}</span>`;
const build = (id, groups) => {
  document.getElementById(id).innerHTML = groups.map(([w, items], i) =>
    `<div class="group${i ? '' : ' start'}" style="width:${w}px"><i class="grip"></i>${items.split(' ').map(item).join('')}</div>`).join('');
};
build('row1', row1);
build('row2', row2);

const star = s('M13 1v8M9 5h8M10 2l6 6M16 2l-6 6', '#e0a000');
const S = {
  load: s('M3.500 10.500l6-6 7 4v7l-6 1-7-3z', '#403800', '#fff8a0') + s('M3.500 11l6 1 6-4M10 12v4M1 1l2 2M4 0l4 4M8 1v3H5', '#403800'),
  tool: s('M3.500 1.500h11v4h-11z', '#601000', '#d05020') + s('M7.500 6v10.500h3V6', K, '#fff'),
  setup: s('M2.500 1.500h9v12h-9z', K, '#fff') + s('M3 8l4 5h5V2H9v6', '#601010', '#d06050') + s('M9.500 9.500h8v7h-8z', K, '#fff') + s('M11 12h5M11 14.500h5', G),
  path: s('M1.500 12.500v-10h5l1 2h7v4l-6 4z', '#605000', '#ffffa0') + s('M7.500 16.500q2-6 9-8v8z', '#303060', '#d0d4f0') + s('M9 16q2-4 7-5', '#4050a0', 'none', 2) + star,
  part: s('M1.500 2.500h15v14h-15z', '#107040', '#c8f0d8') + s('M2 13l3-7 5-3 5 5-2 8H5z', '#108030', '#60d070') + s('M5 6l5 4-1 6', '#108030') + star,
  stock: s('M1.500 2.500l11 0 4 4v10H6l-4.500-4z', '#805020', '#ffd8a8') + s('M1.500 3l5 4h10M6.500 7v9M7 16l5-8', '#805020') + star,
  proc: f('M1 9l6-7 10-1v15H5z', G),
  del: s('M2.500 9l5-7 6 3-4 7-5 1z', '#302080', '#d0d0ff') + s('M8 8l8 8M16 8l-8 8', '#e00000', 'none', 3),
  run: c(11, 3, 2, '#ffe000', K) + s('M3 6l5-1 4 4 4-1M9 7l-2 5 4 2v3M7 12l-4 3H1', K, 'none', 3) + s('M4 6l4-1 4 4 3-1M9 7l-2 5 4 2v2M7 12l-4 2', '#ffe000', 'none', 1),
  filter: s('M1.500 9.500v-8h4l1 2h5v6z', '#605000', '#ffff90') + s('M16.500 4v6h-3', '#e02040') + s('M5 15.500h6l3-5h-4l-3 5', '#2020d0'),
  nav: c(9, 9, 5, G) + s('M9 1v16M1 9h16M3 3l12 12M15 3L3 15', G, 'none', 2),
  sim: s('M1.500 12.500l4-4h11v5l-4 3h-11z', K, '#808080') + f('M5 10h7v3H5z', '#ffff80') + s('M4.500 1.500h9v3h-9zM7.500 5v6h3V5', '#702000', '#e09050'),
  rest: f('M1 4l3-3h11l3 4v8l-5 3H1z', G),
  mot: f('M1 2h4v7l-2 3-2-3zM8 8l8-6 2 3-6 5z', G) + s('M4 15q3-4 6-1t6-2', G, 'none', 2),
  post: s('M1.500 2.500h4l2 2v6h-6z', '#604000', '#ffe890') + s('M9 2h5v5M12 5l2 2 2-2') + s('M8.500 8.500h8v8h-8z', K, '#fff') + f('M10 9h5l-2.500 5z', '#c06020'),
  rep: s('M3.500 1.500h9l3 3v12h-12z', K, '#fff8d8') + f('M5 4h6v3L8 11 5 7z', '#a05010') + s('M10 8.500h4M6 11.500h8M6 14h8', '#806000'),
  job: s('M1.500 1.500h11v11h-11z', '#333', '#fff') + s('M9 3.500H4.500v6H9M8.500 3v4', K, 'none', 1.5) + s('M8.500 9.500h9v7h-9z', '#7a6a80', '#fff') + f('M9 9h8v2H9z', '#8a7a90')
};
const tools = [['load', ['ﾓﾃﾞﾙ読込み', 60]], ['tool', ['工具', 23]], ['setup', ['ICｾｯﾄｱｯﾌﾟ(<u>N</u>', 66]], ['path', ['工具軌跡', 47], ['(<u>I</u>)', 18]], ['part', ['ﾊﾟｰﾂ', 24]], ['stock', ['ｽﾄｯｸ', 24]],
  ['proc', ['手続き(<u>P</u>)', 53], 0, 1], ['del', ['削除', 23]], ['run', ['実行(<u>E</u>)', 41]], ['filter', ['全体ﾌｨﾙﾀ', 48]], ['nav', ['ﾅﾋﾞｹﾞｰﾀ', 42], 0, 1], ['sim', ['加工', 23], ['ｼﾐｭﾚｰｼｮﾝ', 48]],
  ['rest', ['残りｽﾄｯｸ', 48], 0, 1], ['mot', ['動作', 23], ['ｴﾃﾞｨﾀ(<u>M</u>)', 50], 1], ['post', ['ﾎﾟｽﾄﾌﾟﾛｾｽ', 55], ['(<u>P</u>)', 17]], ['rep', ['NCﾚﾎﾟｰﾄ', 47]], ['job', ['ｼﾞｮﾌﾞﾏﾈｰｼﾞｬ', 65]]];
const span = ([text, w]) => `<div><span class="t" data-w="${w}">${text}</span></div>`;
document.getElementById('side').innerHTML = tools.map(([k, a, b, off]) =>
  `<div class="tool${b ? ' two' : ''}${off ? ' off' : ''}">${svg(S[k])}${span(a)}${b ? span(b) : ''}</div>`).join('');

// Parameter rows: [label, width, level, value]; level 0 root, 1 child, 2 pinned root.
const params = [['動作ﾊﾟﾗﾒｰﾀ', 65, 0, 'open'], ['ｱﾌﾟﾛｰﾁとﾘﾄﾗｸﾄ', 81, 1], ['安全共通点と座標系', 110, 1], ['ｴﾝﾄﾘ点と終了点', 87, 1], ['境界設定', 51, 1], ['公差とｵﾌｾｯﾄ', 69, 1], ['電極加工', 51, 1, 'chk'], ['工具軌道', 51, 1], ['工具軌道', 51, 1, 'bar'], ['水平加工拡張', 77, 1], ['複数水平ﾚﾍﾞﾙ', 78, 1, 'chk'], ['Z制限', 32, 1], ['溝加工', 37, 1], ['ﾚﾍﾞﾙ間加工', 65, 1], ['ﾚﾍﾞﾙ間加工', 65, 1], ['ﾚﾍﾞﾙ接続', 52, 1], ['高速加工', 51, 1], ['ﾊﾟｽ間削除', 57, 1], ['表示と編集', 59, 1], ['ﾄﾞﾘﾙﾊﾟﾗﾒｰﾀ', 63, 1], ['深さﾊﾟﾗﾒｰﾀ', 61, 1], ['ﾄﾞﾘﾙﾘﾄﾗｸﾄ', 57, 1], ['ﾎﾙﾀﾞ', 28, 1], ['ｽﾄｯｸ', 28, 1], ['工具ﾁﾙﾄ制御', 75, 1, 'chk'], ['補助輪郭作成', 77, 1, 'chk'], ['最適化', 38, 1, 'chk'], ['ﾕｰｻﾞｰﾊﾟﾗﾒｰﾀ', 75, 1], ['工具とﾎﾙﾀﾞ', 62, 2, 'bar'], ['加工ﾊﾟﾗﾒｰﾀ', 65, 2], ['ｼｰｹﾝｽ制御', 65, 2], ['ｼﾞｵﾒﾄﾘ', 38, 0]];
const lock = '<svg class="lock" width="13" height="14"><path d="M.5 12.500v-5h5M1 12.500h5M8.500 7v7M6 12.500h2" stroke="#888" fill="none"/><circle cx="8" cy="4.500" r="3.500" fill="#8c8c8c"/><circle cx="7" cy="3.500" r="1.500" fill="#c8c8c8"/></svg>';
document.getElementById('params').innerHTML = params.map(([label, w, level, val]) =>
  `<div class="param"><div class="pn ${['', 'child', 'pinned'][level]}">${level ? lock : ''}<svg class="box" width="11" height="11"><path d="M.5 .5h10v10H.5zM2.500 5.500h6${val === 'open' ? '' : 'M5.500 2.500v6'}"/></svg><span class="t" data-w="${w}">${label}</span></div><div>${val === 'chk' || val === 'bar' ? `<i class="${val}"></i>` : ''}</div></div>`).join('');

document.querySelectorAll('.t[data-w]').forEach(el => {
  const natural = el.offsetWidth, w = +el.dataset.w;
  el.style.transform = `scaleX(${w / natural})`;
  el.style.marginRight = `${w - natural}px`;
});
```
